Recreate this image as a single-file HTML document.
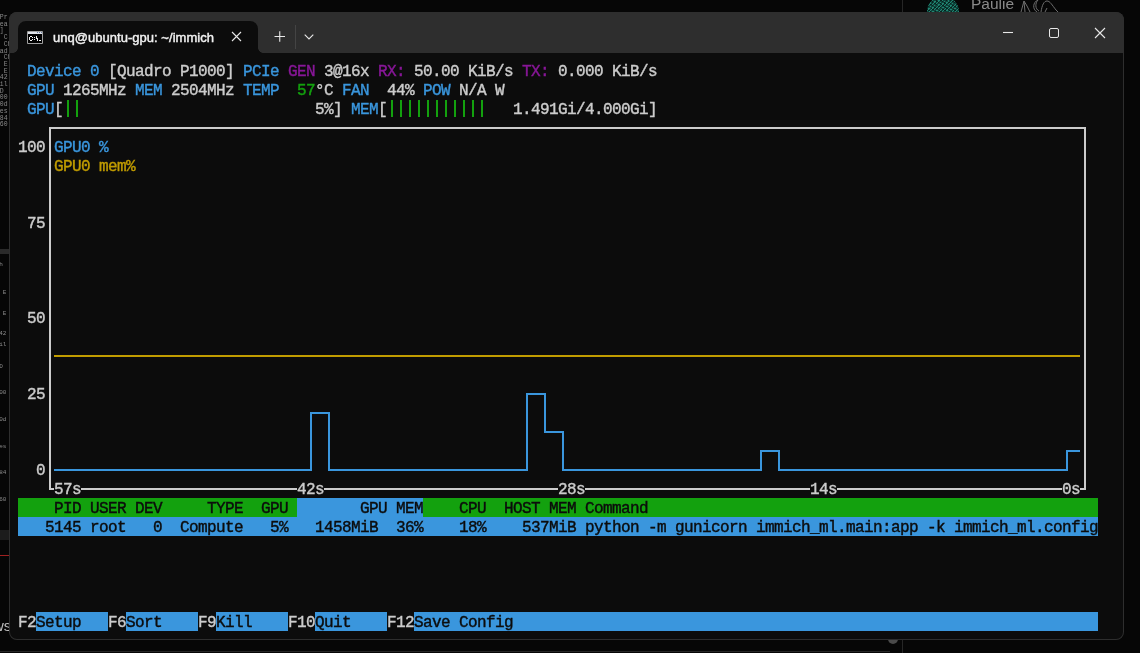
<!DOCTYPE html>
<html><head><meta charset="utf-8"><style>
html,body{margin:0;padding:0;}
body{width:1140px;height:653px;overflow:hidden;background:#060606;position:relative;font-family:"Liberation Sans",sans-serif;}
.t{position:absolute;height:19px;line-height:19px;font-family:"Liberation Mono",monospace;font-size:16px;letter-spacing:-0.6016px;white-space:pre;-webkit-text-stroke:0.4px currentColor;padding-top:2px;box-sizing:border-box;}
#desk{position:absolute;left:0;top:0;width:1140px;height:653px;will-change:transform;}
#win{position:absolute;left:9px;top:12px;width:1115px;height:628px;background:#0c0c0c;border-radius:8px;overflow:hidden;}
#wb{position:absolute;left:9px;top:12px;width:1115px;height:628px;border-radius:8px;box-shadow:inset 0 0 0 1px #2e2e2e;}
#tb{position:absolute;left:0;top:0;width:1115px;height:41px;background:#2e2e2e;}
#tab{position:absolute;left:9px;top:9px;width:240px;height:32px;background:#0c0c0c;border-radius:8px 8px 0 0;}
#title{position:absolute;left:53px;top:29px;will-change:transform;font-family:"Liberation Sans",sans-serif;font-weight:normal;-webkit-text-stroke:0.45px #f0f0f0;font-size:13px;letter-spacing:0.03px;color:#f0f0f0;line-height:18px;white-space:pre;}
.flare{position:absolute;top:36px;width:5px;height:5px;background:radial-gradient(circle at 0 0,#2e2e2e 4.5px,#0c0c0c 5px);}
.flare2{position:absolute;top:36px;width:5px;height:5px;background:radial-gradient(circle at 100% 0,#2e2e2e 4.5px,#0c0c0c 5px);}
#term{position:absolute;left:0;top:0;width:1140px;height:653px;will-change:transform;}
</style></head><body>
<div id="desk">
<div style="position:absolute;left:902px;top:0;width:1px;height:12px;background:#262626"></div>
<div style="position:absolute;left:927px;top:-4px;width:32px;height:32px;border-radius:50%;overflow:hidden;background:#0e463e"><div style="position:absolute;left:0;top:0;width:32px;height:32px;background:repeating-linear-gradient(35deg,rgba(0,0,0,0.5) 0,rgba(0,0,0,0.5) 1px,transparent 1px,transparent 3px),repeating-linear-gradient(-50deg,rgba(40,160,135,0.7) 0,rgba(40,160,135,0.7) 1px,transparent 1px,transparent 2.5px)"></div></div>
<div style="position:absolute;left:971px;top:-5px;font-family:'Liberation Sans',sans-serif;font-size:15.5px;color:#8a8a8a;line-height:18px">Paulie</div>
<svg style="position:absolute;left:1018px;top:0" width="42" height="12"><g fill="none" stroke="#6e6e6e" stroke-width="1"><path d="M3,12 L6,1 L9,6 L12,12 M6,1 L7,12"/><path d="M20,0 C15,2 14,9 19,12 M20,0 C17,3 17,9 21,11"/><path d="M23,12 C24,5 26,1 29,1 C32,1 34,5 38,10 L40,12 M27,12 L29,8"/></g></svg>
<div style="position:absolute;left:0;top:0;width:10px;height:653px;overflow:hidden">
<div style="position:absolute;left:-8px;top:15px;font-family:'Liberation Mono',monospace;font-size:6.5px;line-height:6.7px;color:#8a8a8a;white-space:pre">- Pr
 lea
 2]
 y C
 - Ch
 pad
 - Ch
 I E
 I E
 142
 mil
 MD
 000
 10d
 les
 /84
 160</div>
<div style="position:absolute;left:0;top:249px;width:10px;height:5px;background:#2a2a2a"></div>
<div style="position:absolute;left:-8px;top:262px;font-family:'Liberation Mono',monospace;font-size:6px;line-height:6px;color:#8a8a8a;white-space:pre"> Ch</div>
<div style="position:absolute;left:-8px;top:289px;font-family:'Liberation Mono',monospace;font-size:6px;color:#8a8a8a;white-space:pre"> I E</div>
<div style="position:absolute;left:-8px;top:310px;font-family:'Liberation Mono',monospace;font-size:6px;color:#8a8a8a;white-space:pre"> I E</div>
<div style="position:absolute;left:-8px;top:330px;font-family:'Liberation Mono',monospace;font-size:6px;color:#8a8a8a;white-space:pre"> 142</div>
<div style="position:absolute;left:-8px;top:341px;font-family:'Liberation Mono',monospace;font-size:6px;color:#8a8a8a;white-space:pre"> mil</div>
<div style="position:absolute;left:-8px;top:363px;font-family:'Liberation Mono',monospace;font-size:6px;color:#8a8a8a;white-space:pre"> MD</div>
<div style="position:absolute;left:-8px;top:389px;font-family:'Liberation Mono',monospace;font-size:6px;color:#8a8a8a;white-space:pre"> 000</div>
<div style="position:absolute;left:-8px;top:416px;font-family:'Liberation Mono',monospace;font-size:6px;color:#8a8a8a;white-space:pre"> 10d</div>
<div style="position:absolute;left:-8px;top:443px;font-family:'Liberation Mono',monospace;font-size:6px;color:#8a8a8a;white-space:pre"> les</div>
<div style="position:absolute;left:-8px;top:469px;font-family:'Liberation Mono',monospace;font-size:6px;color:#8a8a8a;white-space:pre"> /84</div>
<div style="position:absolute;left:-8px;top:496px;font-family:'Liberation Mono',monospace;font-size:6px;color:#8a8a8a;white-space:pre"> 160</div>
<div style="position:absolute;left:0;top:530px;width:10px;height:10px;background:#1c1c1c"></div>
<div style="position:absolute;left:0;top:555px;width:10px;height:1px;background:#a02020"></div>
<div style="position:absolute;left:-7px;top:618px;font-family:'Liberation Sans',sans-serif;font-size:15px;line-height:16px;color:#bdbdbd">ws</div>
</div>
<div style="position:absolute;left:0;top:651px;width:890px;height:1px;background:#262626"></div>
<div style="position:absolute;left:902px;top:639px;width:1px;height:14px;background:#262626"></div>
<div style="position:absolute;left:888px;top:634px;width:10px;height:10px;border-radius:50%;background:#4a4a4a"></div>
</div>
<div id="win">
<div id="tb"></div>
<div id="tab"></div>
<div class="flare" style="left:4px;"></div>
<div class="flare2" style="left:249px;"></div>
</div>
<div id="wb"></div>
<svg width="1140" height="653" style="position:absolute;left:0;top:0">
<g fill="none" stroke="#e6e6e6" stroke-width="1">
<path d="M27.5,31.5 h15 v12 h-15 z" stroke="#a0a0a0"/>
</g>
<rect x="28" y="32" width="14" height="2" fill="#dde1e8"/>
<rect x="28" y="34" width="14" height="9" fill="#000"/>
<rect x="39" y="32" width="1" height="1" fill="#6a7ca0"/><rect x="37" y="32" width="1" height="1" fill="#6a7ca0"/><rect x="41" y="32" width="1" height="1" fill="#6a7ca0"/>
<g stroke="#e8e8e8" stroke-width="1.1" fill="none">
<path d="M232,32 L241,41 M241,32 L232,41"/>
<path d="M274.5,36.5 H285 M279.75,31.2 V41.8"/>
<path d="M304.7,34.7 L309,39 L313.3,34.7"/>
<path d="M1003,32.5 H1013"/>
<rect x="1049.5" y="28.5" width="9" height="9" rx="1.5" stroke-width="1"/>
<path d="M1095,28 L1105,38 M1105,28 L1095,38"/>
</g>
<g fill="#f4f4f4"><rect x="30" y="36" width="2" height="1"/><rect x="29" y="37" width="1" height="3"/><rect x="30" y="40" width="2" height="1"/><rect x="32" y="37" width="1" height="1"/><rect x="32" y="39" width="1" height="1"/><rect x="34" y="37" width="1" height="1"/><rect x="34" y="39" width="1" height="1"/><rect x="36" y="36" width="1" height="3"/><rect x="37" y="38" width="1" height="3"/><rect x="39" y="40" width="2" height="1"/></g>
<rect x="295" y="25" width="1" height="24" fill="#444"/>
</svg>
<div id="title">unq@ubuntu-gpu: ~/immich</div>
<div id="term">
<div style="position:absolute;left:67px;top:100px;width:2px;height:17px;background:#13a10e"></div>
<div style="position:absolute;left:76px;top:100px;width:2px;height:17px;background:#13a10e"></div>
<div style="position:absolute;left:391px;top:100px;width:2px;height:17px;background:#13a10e"></div>
<div style="position:absolute;left:400px;top:100px;width:2px;height:17px;background:#13a10e"></div>
<div style="position:absolute;left:409px;top:100px;width:2px;height:17px;background:#13a10e"></div>
<div style="position:absolute;left:418px;top:100px;width:2px;height:17px;background:#13a10e"></div>
<div style="position:absolute;left:427px;top:100px;width:2px;height:17px;background:#13a10e"></div>
<div style="position:absolute;left:436px;top:100px;width:2px;height:17px;background:#13a10e"></div>
<div style="position:absolute;left:445px;top:100px;width:2px;height:17px;background:#13a10e"></div>
<div style="position:absolute;left:454px;top:100px;width:2px;height:17px;background:#13a10e"></div>
<div style="position:absolute;left:463px;top:100px;width:2px;height:17px;background:#13a10e"></div>
<div style="position:absolute;left:472px;top:100px;width:2px;height:17px;background:#13a10e"></div>
<div style="position:absolute;left:481px;top:100px;width:2px;height:17px;background:#13a10e"></div>
<div class="t" style="left:27px;top:61px;width:72px;color:#3a96dd;">Device 0</div>
<div class="t" style="left:108px;top:61px;width:126px;color:#cccccc;">[Quadro P1000]</div>
<div class="t" style="left:243px;top:61px;width:36px;color:#3a96dd;">PCIe</div>
<div class="t" style="left:288px;top:61px;width:27px;color:#881798;">GEN</div>
<div class="t" style="left:324px;top:61px;width:45px;color:#cccccc;">3@16x</div>
<div class="t" style="left:378px;top:61px;width:27px;color:#881798;">RX:</div>
<div class="t" style="left:414px;top:61px;width:99px;color:#cccccc;">50.00 KiB/s</div>
<div class="t" style="left:522px;top:61px;width:27px;color:#881798;">TX:</div>
<div class="t" style="left:558px;top:61px;width:99px;color:#cccccc;">0.000 KiB/s</div>
<div class="t" style="left:27px;top:80px;width:27px;color:#3a96dd;">GPU</div>
<div class="t" style="left:63px;top:80px;width:63px;color:#cccccc;">1265MHz</div>
<div class="t" style="left:135px;top:80px;width:27px;color:#3a96dd;">MEM</div>
<div class="t" style="left:171px;top:80px;width:63px;color:#cccccc;">2504MHz</div>
<div class="t" style="left:243px;top:80px;width:36px;color:#3a96dd;">TEMP</div>
<div class="t" style="left:297px;top:80px;width:18px;color:#13a10e;">57</div>
<div class="t" style="left:315px;top:80px;width:18px;color:#cccccc;">°C</div>
<div class="t" style="left:342px;top:80px;width:27px;color:#3a96dd;">FAN</div>
<div class="t" style="left:387px;top:80px;width:27px;color:#cccccc;">44%</div>
<div class="t" style="left:423px;top:80px;width:27px;color:#3a96dd;">POW</div>
<div class="t" style="left:459px;top:80px;width:45px;color:#cccccc;">N/A W</div>
<div class="t" style="left:27px;top:99px;width:27px;color:#3a96dd;">GPU</div>
<div class="t" style="left:54px;top:99px;width:9px;color:#cccccc;">[</div>
<div class="t" style="left:315px;top:99px;width:27px;color:#cccccc;">5%]</div>
<div class="t" style="left:351px;top:99px;width:27px;color:#3a96dd;">MEM</div>
<div class="t" style="left:378px;top:99px;width:9px;color:#cccccc;">[</div>
<div class="t" style="left:513px;top:99px;width:144px;color:#cccccc;">1.491Gi/4.000Gi]</div>
<div class="t" style="left:18px;top:137px;width:27px;color:#cccccc;">100</div>
<div class="t" style="left:54px;top:137px;width:54px;color:#3a96dd;">GPU0 %</div>
<div class="t" style="left:54px;top:156px;width:81px;color:#c19c00;">GPU0 mem%</div>
<div class="t" style="left:27px;top:213px;width:18px;color:#cccccc;">75</div>
<div class="t" style="left:27px;top:308px;width:18px;color:#cccccc;">50</div>
<div class="t" style="left:27px;top:384px;width:18px;color:#cccccc;">25</div>
<div class="t" style="left:36px;top:460px;width:9px;color:#cccccc;">0</div>
<div class="t" style="left:54px;top:479px;width:27px;color:#cccccc;">57s</div>
<div class="t" style="left:297px;top:479px;width:27px;color:#cccccc;">42s</div>
<div class="t" style="left:558px;top:479px;width:27px;color:#cccccc;">28s</div>
<div class="t" style="left:810px;top:479px;width:27px;color:#cccccc;">14s</div>
<div class="t" style="left:1062px;top:479px;width:18px;color:#cccccc;">0s</div>
<div class="t" style="left:18px;top:498px;width:279px;color:#0c0c0c;background:#13a10e;"></div>
<div class="t" style="left:297px;top:498px;width:126px;color:#0c0c0c;background:#3a96dd;"></div>
<div class="t" style="left:423px;top:498px;width:675px;color:#0c0c0c;background:#13a10e;"></div>
<div class="t" style="left:54px;top:498px;width:27px;color:#0c0c0c;">PID</div>
<div class="t" style="left:90px;top:498px;width:36px;color:#0c0c0c;">USER</div>
<div class="t" style="left:135px;top:498px;width:27px;color:#0c0c0c;">DEV</div>
<div class="t" style="left:207px;top:498px;width:36px;color:#0c0c0c;">TYPE</div>
<div class="t" style="left:261px;top:498px;width:27px;color:#0c0c0c;">GPU</div>
<div class="t" style="left:360px;top:498px;width:63px;color:#0c0c0c;">GPU MEM</div>
<div class="t" style="left:459px;top:498px;width:27px;color:#0c0c0c;">CPU</div>
<div class="t" style="left:504px;top:498px;width:72px;color:#0c0c0c;">HOST MEM</div>
<div class="t" style="left:585px;top:498px;width:63px;color:#0c0c0c;">Command</div>
<div class="t" style="left:18px;top:517px;width:1080px;color:#0c0c0c;background:#3a96dd;"></div>
<div class="t" style="left:45px;top:517px;width:36px;color:#0c0c0c;">5145</div>
<div class="t" style="left:90px;top:517px;width:36px;color:#0c0c0c;">root</div>
<div class="t" style="left:153px;top:517px;width:9px;color:#0c0c0c;">0</div>
<div class="t" style="left:180px;top:517px;width:63px;color:#0c0c0c;">Compute</div>
<div class="t" style="left:270px;top:517px;width:18px;color:#0c0c0c;">5%</div>
<div class="t" style="left:315px;top:517px;width:63px;color:#0c0c0c;">1458MiB</div>
<div class="t" style="left:396px;top:517px;width:27px;color:#0c0c0c;">36%</div>
<div class="t" style="left:459px;top:517px;width:27px;color:#0c0c0c;">18%</div>
<div class="t" style="left:522px;top:517px;width:54px;color:#0c0c0c;">537MiB</div>
<div class="t" style="left:585px;top:517px;width:513px;color:#0c0c0c;">python -m gunicorn immich_ml.main:app -k immich_ml.config</div>
<div class="t" style="left:18px;top:612px;width:18px;color:#cccccc;">F2</div>
<div class="t" style="left:36px;top:612px;width:72px;color:#0c0c0c;background:#3a96dd;">Setup   </div>
<div class="t" style="left:108px;top:612px;width:18px;color:#cccccc;">F6</div>
<div class="t" style="left:126px;top:612px;width:72px;color:#0c0c0c;background:#3a96dd;">Sort    </div>
<div class="t" style="left:198px;top:612px;width:18px;color:#cccccc;">F9</div>
<div class="t" style="left:216px;top:612px;width:72px;color:#0c0c0c;background:#3a96dd;">Kill    </div>
<div class="t" style="left:288px;top:612px;width:27px;color:#cccccc;">F10</div>
<div class="t" style="left:315px;top:612px;width:72px;color:#0c0c0c;background:#3a96dd;">Quit    </div>
<div class="t" style="left:387px;top:612px;width:27px;color:#cccccc;">F12</div>
<div class="t" style="left:414px;top:612px;width:684px;color:#0c0c0c;background:#3a96dd;">Save Config                                                                 </div>
<svg width="1140" height="653" style="position:absolute;left:0;top:0" shape-rendering="crispEdges">
<path d="M50,489 L50,128 L1085,128 L1085,489 M49,489 L54,489 M81,489 L297,489 M324,489 L558,489 M585,489 L810,489 M837,489 L1062,489 M1080,489 L1086,489" stroke="#cccccc" stroke-width="2" fill="none" stroke-linecap="butt" stroke-linejoin="miter"/>
<path d="M54,356 L1080,356" stroke="#c19c00" stroke-width="2" fill="none"/>
<path d="M54,470 L311,470 L311,413 L329,413 L329,470 L527,470 L527,394 L545,394 L545,432 L563,432 L563,470 L761,470 L761,451 L779,451 L779,470 L1067,470 L1067,451 L1080,451" stroke="#3a96dd" stroke-width="2" fill="none" stroke-linejoin="miter"/>
</svg>
</div>
</body></html>
